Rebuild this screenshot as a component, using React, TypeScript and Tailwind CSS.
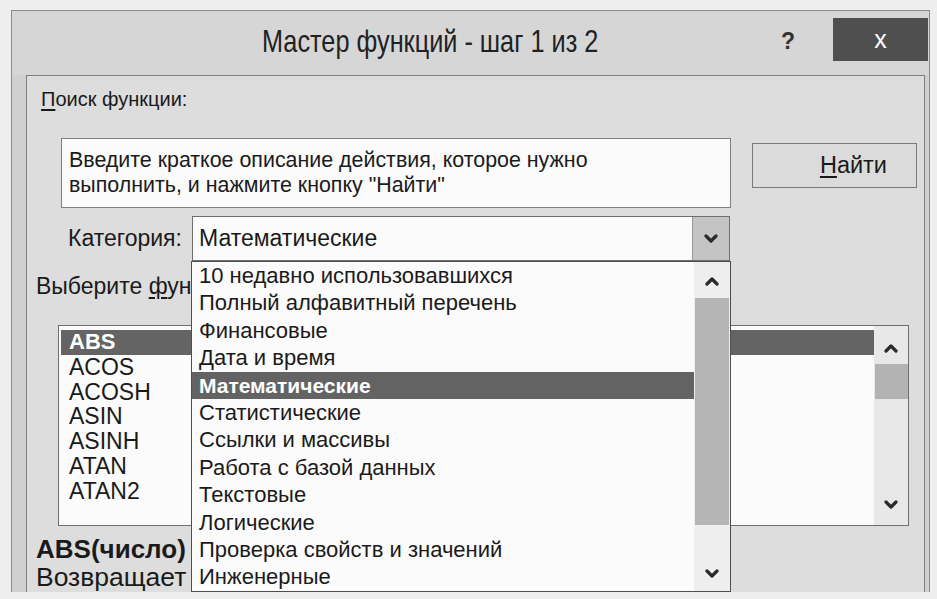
import React from "react";

const categories = [
  "10 недавно использовавшихся",
  "Полный алфавитный перечень",
  "Финансовые",
  "Дата и время",
  "Математические",
  "Статистические",
  "Ссылки и массивы",
  "Работа с базой данных",
  "Текстовые",
  "Логические",
  "Проверка свойств и значений",
  "Инженерные",
];

const functions = ["ABS", "ACOS", "ACOSH", "ASIN", "ASINH", "ATAN", "ATAN2"];

function Chevron({ up = false }: { up?: boolean }) {
  return (
    <svg width="14" height="10" viewBox="0 0 14 10" className="block">
      <polyline
        points={up ? "2,8 7,3 12,8" : "2,2 7,7 12,2"}
        fill="none"
        stroke="#2a2a2a"
        strokeWidth="3.2"
        strokeLinecap="round"
        strokeLinejoin="round"
      />
    </svg>
  );
}

export default function App() {
  return (
    <div className="w-[937px] h-[599px] overflow-hidden bg-[#eeeeee] pt-[10px] pl-[11px] font-['Liberation_Sans',Arial,sans-serif] text-[#1a1a1a]">
      <div className="w-[919px] h-[582px] bg-[#d6d6d6] border-l border-t border-r border-[#8c8c8c] flex flex-col">
        {/* title bar */}
        <div className="h-[64px] flex items-start shrink-0">
          <div className="pl-[250px] pt-[11px] w-[769px] whitespace-nowrap">
            <span className="inline-block origin-left scale-x-[0.79] text-[32px] leading-[38px] text-[#222]">
              Мастер функций - шаг 1 из 2
            </span>
          </div>
          <div className="pt-[13px] w-[52px] text-[23px] leading-[34px] font-bold text-[#333]">?</div>
          <div className="mt-[7px] w-[95px] h-[43px] bg-[#4f4f4f] flex items-center justify-center text-white text-[25px] leading-none">
            x
          </div>
        </div>

        {/* content area */}
        <div className="flex-1 flex pl-[14px] bg-[#d0d0d0]">
          <div className="flex-1 relative bg-[#dddddd] border-l border-t border-r border-[#7f7f7f] mr-[4px]">
            <div className="mt-[11px] ml-[14px] text-[20px] leading-[24px]">
              <span className="underline underline-offset-[3px]">П</span>оиск функции:
            </div>

            <div className="mt-[27px] ml-[34px] flex items-start">
              <div className="w-[670px] h-[70px] bg-[#fbfbfb] border border-[#808080] px-[7px] pt-[9px] text-[21.4px] leading-[25px] whitespace-nowrap">
                Введите краткое описание действия, которое нужно
                <br />
                выполнить, и нажмите кнопку "Найти"
              </div>
              <div className="ml-[21px] mt-[5px] w-[165px] h-[45px] border border-[#7a7a7a] bg-[#dbdbdb] flex items-center justify-end pr-[29px] text-[23.5px]">
                <span>
                  <span className="underline underline-offset-[3px]">Н</span>айти
                </span>
              </div>
            </div>

            <div className="mt-[8px] ml-[41px] flex items-center">
              <div className="w-[124px] text-[23px]">Категория:</div>
              <div className="w-[538px] h-[45px] bg-[#fbfbfb] border border-[#6f6f6f] flex items-center">
                <div className="flex-1 pl-[6px] text-[23px]">Математические</div>
                <div className="w-[37px] h-full bg-[#c4c4c4] border-l border-[#9a9a9a] flex items-center justify-center">
                  <Chevron />
                </div>
              </div>
            </div>

            <div className="mt-[12px] ml-[9px] w-[155px] overflow-hidden whitespace-nowrap text-[23px] leading-[26px]">
              Выберите <span className="underline underline-offset-[3px]">ф</span>ун
            </div>

            <div className="mt-[26px] ml-[31px] w-[851px] h-[201px] bg-[#fbfbfb] border border-[#6e6e6e] flex">
              <div className="flex-1 pt-[4px] pl-[2px]">
                {functions.map((f, i) => (
                  <div
                    key={f}
                    className={
                      i === 0
                        ? "h-[24.8px] bg-[#646464] text-white font-bold pl-[8px] text-[22px] leading-[24.8px]"
                        : "h-[24.8px] pl-[8px] text-[23px] leading-[24.8px]"
                    }
                  >
                    {f}
                  </div>
                ))}
              </div>
              <div className="w-[34px] bg-[#e8e8e8] flex flex-col items-center">
                <div className="mt-[17px]">
                  <Chevron up />
                </div>
                <div className="mt-[11px] w-[33px] h-[35px] bg-[#b3b3b3]" />
                <div className="mt-auto mb-[15px]">
                  <Chevron />
                </div>
              </div>
            </div>

            <div className="mt-[9px] ml-[9px] w-[155px] whitespace-nowrap text-[26px] leading-[28px] font-bold">
              ABS(число)
            </div>
            <div className="mt-[0px] ml-[9px] w-[155px] whitespace-nowrap text-[26.5px] leading-[28px]">
              Возвращает
            </div>

            {/* open category dropdown */}
            <div className="absolute left-[164px] top-[185px] w-[540px] h-[331px] bg-[#fbfbfb] border border-[#4e4e4e] flex">
              <div className="flex-1">
                {categories.map((c, i) => (
                  <div
                    key={c}
                    className={
                      i === 4
                        ? "h-[27.4px] bg-[#636363] text-white font-bold pl-[7px] text-[21px] leading-[27.4px]"
                        : "h-[27.4px] pl-[7px] text-[22px] leading-[27.4px]"
                    }
                  >
                    {c}
                  </div>
                ))}
              </div>
              <div className="w-[36px] bg-[#eeeeee] flex flex-col items-center">
                <div className="mt-[14px]">
                  <Chevron up />
                </div>
                <div className="mt-[12px] w-[34px] h-[227px] bg-[#b5b5b5]" />
                <div className="mt-auto mb-[12px]">
                  <Chevron />
                </div>
              </div>
            </div>
          </div>
        </div>
      </div>
    </div>
  );
}
